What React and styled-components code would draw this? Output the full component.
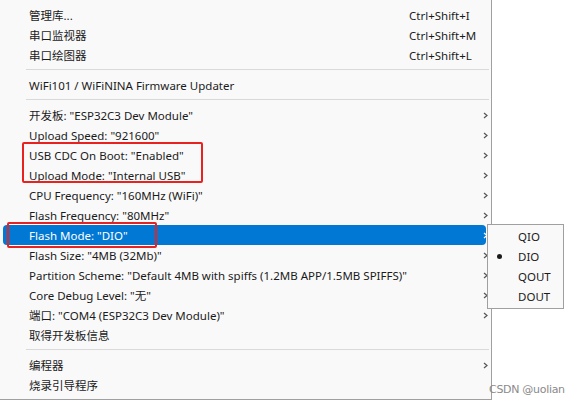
import React from "react";
import styled, { createGlobalStyle } from "styled-components";

const GlobalStyle = createGlobalStyle`
  html, body {
    margin: 0;
    padding: 0;
    background: #ffffff;
  }
  body {
    font-family: "Noto Sans", "Noto Sans CJK SC", sans-serif;
    font-size: 11.5px;
    color: #1b1b1b;
  }
`;

const mainItems = [
  { label: "管理库...", shortcut: "Ctrl+Shift+I" },
  { label: "串口监视器", shortcut: "Ctrl+Shift+M" },
  { label: "串口绘图器", shortcut: "Ctrl+Shift+L" },
  { sep: true },
  { label: "WiFi101 / WiFiNINA Firmware Updater" },
  { sep: true },
  { label: '开发板: "ESP32C3 Dev Module"', sub: true },
  { label: 'Upload Speed: "921600"', sub: true },
  { label: 'USB CDC On Boot: "Enabled"', sub: true },
  { label: 'Upload Mode: "Internal USB"', sub: true },
  { label: 'CPU Frequency: "160MHz (WiFi)"', sub: true },
  { label: 'Flash Frequency: "80MHz"', sub: true },
  { label: 'Flash Mode: "DIO"', sub: true, active: true },
  { label: 'Flash Size: "4MB (32Mb)"', sub: true },
  { label: 'Partition Scheme: "Default 4MB with spiffs (1.2MB APP/1.5MB SPIFFS)"', sub: true },
  { label: 'Core Debug Level: "无"', sub: true },
  { label: '端口: "COM4 (ESP32C3 Dev Module)"', sub: true },
  { label: "取得开发板信息" },
  { sep: true },
  { label: "编程器", sub: true },
  { label: "烧录引导程序" },
];

const modes = ["QIO", "DIO", "QOUT", "DOUT"];

const Chevron = ({ light }) => (
  <svg width="5" height="7" viewBox="0 0 5 7">
    <polyline
      points="1,1 4,3.5 1,6"
      fill="none"
      stroke={light ? "#ffffff" : "#555555"}
      strokeWidth="1.2"
    />
  </svg>
);

const App = () => {
  return (
    <Page>
      <GlobalStyle />
      <Menu>
        {mainItems.map((item, i) =>
          item.sep ? (
            <Separator key={i} />
          ) : (
            <Row key={i} $active={item.active}>
              <Label>{item.label}</Label>
              {item.shortcut && <Shortcut>{item.shortcut}</Shortcut>}
              {item.sub && (
                <Arrow>
                  <Chevron light={item.active} />
                </Arrow>
              )}
            </Row>
          )
        )}
      </Menu>

      <SubMenu>
        {modes.map((m) => (
          <SubRow key={m}>
            <Bullet>{m === "DIO" ? <Dot /> : null}</Bullet>
            {m}
          </SubRow>
        ))}
      </SubMenu>

      <RedBox style={{ left: 22, top: 142, width: 181, height: 41 }} />
      <RedBox style={{ left: 7, top: 222, width: 150, height: 26 }} />

      <Watermark>CSDN @uolian</Watermark>
    </Page>
  );
};

// Styled
const Page = styled.div`
  position: relative;
  width: 578px;
  height: 404px;
  overflow: hidden;
`;

const Menu = styled.div`
  width: 492px;
  height: 400px;
  box-sizing: border-box;
  background: #f9f9f9;
  border-right: 1px solid #a0a0a0;
  border-bottom: 1px solid #a0a0a0;
  padding-top: 5px;
  display: flex;
  flex-direction: column;
`;

const Row = styled.div`
  position: relative;
  display: flex;
  align-items: center;
  height: 20px;
  margin: 0 5px 0 3px;
  padding-left: 26px;
  border-radius: 4px;
  color: ${(p) => (p.$active ? "#ffffff" : "#1b1b1b")};
  background: ${(p) => (p.$active ? "#0078d4" : "transparent")};
  white-space: nowrap;
`;

const Label = styled.span`
  flex: 1;
`;

const Shortcut = styled.span`
  width: 77px;
`;

const Arrow = styled.span`
  position: absolute;
  right: -2px;
  top: 7px;
  display: flex;
`;

const Separator = styled.div`
  height: 1px;
  margin: 4px 2px 5px 26px;
  background: #d9d9d9;
`;

const SubMenu = styled.div`
  position: absolute;
  left: 487px;
  top: 224px;
  width: 77px;
  height: 85px;
  box-sizing: border-box;
  padding-top: 1px;
  background: #f9f9f9;
  border: 1px solid #a0a0a0;
  display: flex;
  flex-direction: column;
`;

const SubRow = styled.div`
  display: flex;
  align-items: center;
  height: 20px;
  color: #1b1b1b;
`;

const Bullet = styled.span`
  width: 30px;
  box-sizing: border-box;
  padding-left: 9px;
  display: flex;
`;

const Dot = styled.span`
  width: 5px;
  height: 5px;
  border-radius: 50%;
  background: #1b1b1b;
`;

const RedBox = styled.div`
  position: absolute;
  box-sizing: border-box;
  border: 2.5px solid #e8231f;
  border-radius: 2px;
`;

const Watermark = styled.div`
  position: absolute;
  left: 489px;
  top: 383px;
  font-family: "DejaVu Sans", sans-serif;
  font-size: 11px;
  color: #8a8a8a;
  letter-spacing: -0.3px;
`;

export default App;
